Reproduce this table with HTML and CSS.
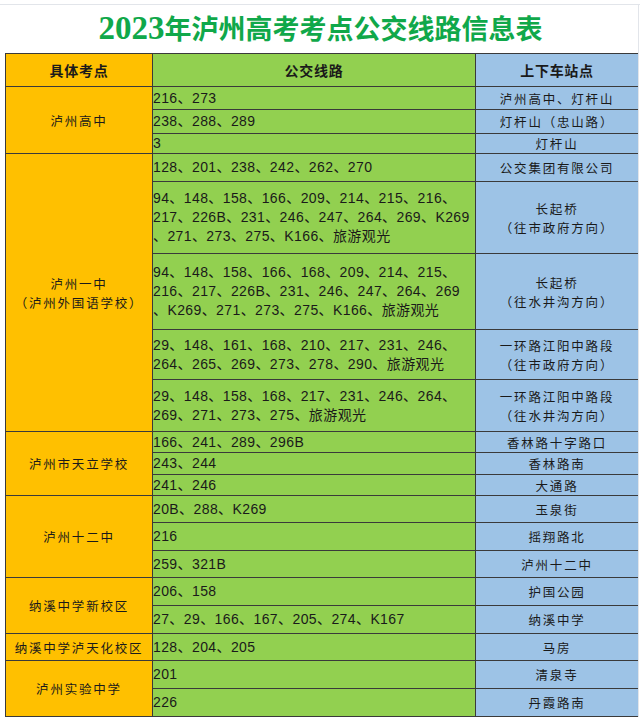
FILE: index.html
```html
<!DOCTYPE html>
<html lang="zh-CN">
<head>
<meta charset="utf-8">
<title>2023年泸州高考考点公交线路信息表</title>
<link rel="stylesheet" href="styles.css">
</head>
<body>
<div class="page">
  <h1 class="title"><span class="yr">2023</span>年泸州高考考点公交线路信息表</h1>
  <table class="bus">
    <colgroup><col class="c1"><col class="c2"><col class="c3"></colgroup>
    <thead>
      <tr class="h33"><th class="org">具体考点</th><th class="grn">公交线路</th><th class="blu">上下车站点</th></tr>
    </thead>
    <tbody>
      <tr class="h23"><td class="org school" rowspan="3">泸州高中</td><td class="grn route">216、273</td><td class="blu stop">泸州高中、灯杆山</td></tr>
      <tr class="h24"><td class="grn route">238、288、289</td><td class="blu stop">灯杆山（忠山路）</td></tr>
      <tr class="h20"><td class="grn route">3</td><td class="blu stop">灯杆山</td></tr>

      <tr class="h28"><td class="org school" rowspan="5">泸州一中<br>（泸州外国语学校）</td><td class="grn route">128、201、238、242、262、270</td><td class="blu stop">公交集团有限公司</td></tr>
      <tr class="h72"><td class="grn route">94、148、158、166、209、214、215、216、<br>217、226B、231、246、247、264、269、K269<br>、271、273、275、K166、旅游观光</td><td class="blu stop">长起桥<br>（往市政府方向）</td></tr>
      <tr class="h76"><td class="grn route">94、148、158、166、168、209、214、215、<br>216、217、226B、231、246、247、264、269<br>、K269、271、273、275、K166、旅游观光</td><td class="blu stop">长起桥<br>（往水井沟方向）</td></tr>
      <tr class="h50"><td class="grn route">29、148、161、168、210、217、231、246、<br>264、265、269、273、278、290、旅游观光</td><td class="blu stop">一环路江阳中路段<br>（往市政府方向）</td></tr>
      <tr class="h52"><td class="grn route">29、148、158、168、217、231、246、264、<br>269、271、273、275、旅游观光</td><td class="blu stop">一环路江阳中路段<br>（往水井沟方向）</td></tr>

      <tr class="h21"><td class="org school" rowspan="3">泸州市天立学校</td><td class="grn route">166、241、289、296B</td><td class="blu stop">香林路十字路口</td></tr>
      <tr class="h22"><td class="grn route">243、244</td><td class="blu stop">香林路南</td></tr>
      <tr class="h21"><td class="grn route">241、246</td><td class="blu stop">大通路</td></tr>

      <tr class="h27"><td class="org school" rowspan="3">泸州十二中</td><td class="grn route">20B、288、K269</td><td class="blu stop">玉泉街</td></tr>
      <tr class="h28"><td class="grn route">216</td><td class="blu stop">摇翔路北</td></tr>
      <tr class="h27"><td class="grn route">259、321B</td><td class="blu stop">泸州十二中</td></tr>

      <tr class="h28"><td class="org school" rowspan="2">纳溪中学新校区</td><td class="grn route">206、158</td><td class="blu stop">护国公园</td></tr>
      <tr class="h28"><td class="grn route">27、29、166、167、205、274、K167</td><td class="blu stop">纳溪中学</td></tr>

      <tr class="h27"><td class="org school">纳溪中学泸天化校区</td><td class="grn route">128、204、205</td><td class="blu stop">马房</td></tr>

      <tr class="h28"><td class="org school" rowspan="2">泸州实验中学</td><td class="grn route">201</td><td class="blu stop">清泉寺</td></tr>
      <tr class="h28"><td class="grn route">226</td><td class="blu stop">丹霞路南</td></tr>
    </tbody>
  </table>
</div>
</body>
</html>
```
FILE: styles.css
```css
html, body {
  margin: 0;
  padding: 0;
  background: #ffffff;
}
.page {
  width: 640px;
  margin-top: 4px;
  border-top: 1px solid #e2e5ea;
  box-sizing: border-box;
  padding-left: 5px;
  position: relative;
}
.page::after {
  content: "";
  position: absolute;
  right: 1px;
  top: 0;
  bottom: 0;
  width: 1px;
  background: #e2e5ea;
}
.title {
  margin: 0;
  height: 48px;
  line-height: 46px;
  text-align: center;
  color: #10a84a;
  font-family: "Noto Sans CJK SC", sans-serif;
  font-weight: 700;
  font-size: 27px;
  letter-spacing: 0;
  padding-right: 4px;
  white-space: nowrap;
}
.title .yr {
  font-family: "Liberation Serif", serif;
  font-size: 33px;
  letter-spacing: 0;
}
.bus {
  border-collapse: collapse;
  table-layout: fixed;
  width: 633px;
  border: 1px solid #3a3a3a;
}
.c1 { width: 147px; }
.c2 { width: 323px; }
.c3 { width: 163px; }
.bus th, .bus td {
  border: 1px solid #3a3a3a;
  padding: 0;
  box-sizing: border-box;
  vertical-align: middle;
  color: #1a1a1a;
}
.bus th {
  font-family: "Noto Sans CJK SC", sans-serif;
  font-weight: 700;
  font-size: 14px;
  letter-spacing: 0.7px;
  text-align: center;
}
.org { background: #ffc000; }
.grn { background: #92d050; }
.blu { background: #9dc3e6; }

.school, .stop {
  font-family: "Noto Sans CJK SC", sans-serif;
  font-size: 12.5px;
  letter-spacing: 1.8px;
  line-height: 19px;
  text-align: center;
}
.route {
  font-family: "Liberation Sans", "Noto Sans CJK SC", sans-serif;
  font-size: 14px;
  letter-spacing: 0.4px;
  line-height: 19px;
  text-align: left;
  padding-left: 3px;
  white-space: nowrap;
}

.h20 > * { height: 20px; }
.h21 > * { height: 21px; }
.h22 > * { height: 22px; }
.h23 > * { height: 23px; }
.h24 > * { height: 24px; }
.h27 > * { height: 27px; }
.h28 > * { height: 28px; }
.h33 > * { height: 33px; }
.h50 > * { height: 50px; }
.h52 > * { height: 52px; }
.h72 > * { height: 72px; }
.h76 > * { height: 76px; }
```
